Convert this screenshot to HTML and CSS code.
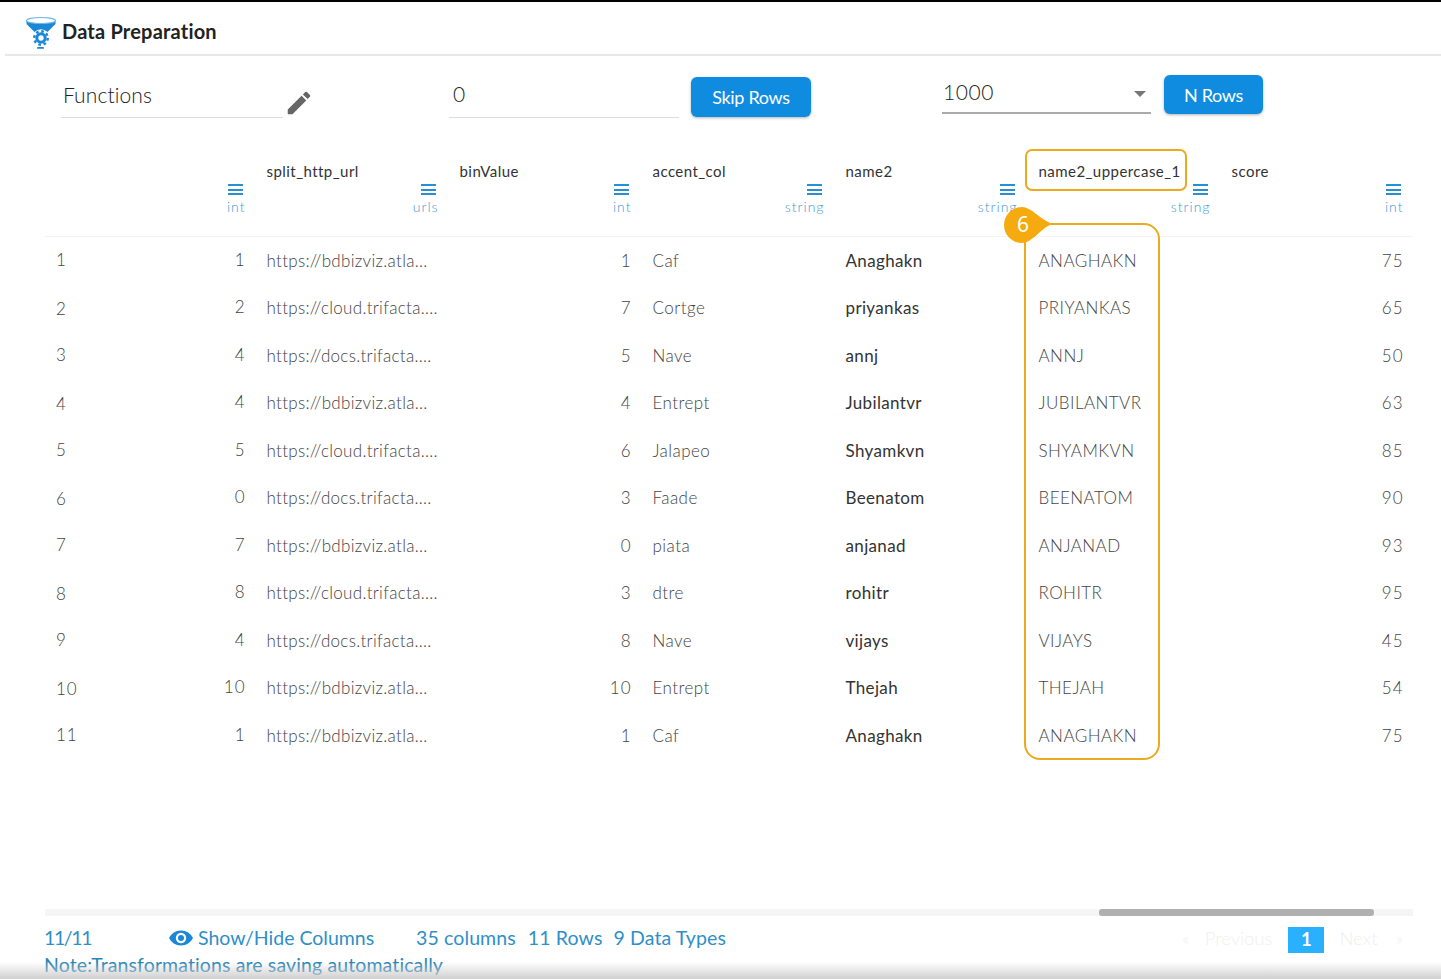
FILE: index.html
```html
<!DOCTYPE html>
<html lang="en">
<head>
<meta charset="utf-8">
<title>Data Preparation</title>
<link rel="stylesheet" href="styles.css">
</head>
<body>
<div class="app">
  <header class="topbar">
    <svg class="logo" viewBox="0 0 32 34" width="32" height="34" aria-hidden="true">
      <path d="M1.5 4.5C1.5 8 30.500 8 30.500 4.500V8L21 17.500H11L1.500 8Z" fill="#1b87d6"/>
      <ellipse cx="16" cy="4.500" rx="14.500" ry="3" fill="#fff" stroke="#6db8e8" stroke-width="1.200"/>
      <path d="M3 7.500C8 10 24 10 29 7.500L21 16H11Z" fill="#1b87d6"/>
      <circle cx="16" cy="22" r="8.800" fill="#fff"/>
      <circle cx="16" cy="22" r="6.800" fill="none" stroke="#1b87d6" stroke-width="2.400" stroke-dasharray="2.700 2.640"/>
      <circle cx="16" cy="22" r="4.200" fill="none" stroke="#1b87d6" stroke-width="3"/>
      <rect x="12" y="31" width="7" height="1.800" rx=".9" fill="#1b87d6"/>
    </svg>
    <span class="title">Data Preparation</span>
  </header>

  <section class="controls">
    <div class="field field-fn">Functions</div>
    <svg class="pencil" viewBox="0 0 24 24" width="30" height="30" aria-hidden="true"><path d="M3 17.250V21h3.750L17.810 9.940l-3.750-3.750L3 17.250zM20.710 7.040a1 1 0 0 0 0-1.410l-2.340-2.340a1 1 0 0 0-1.410 0l-1.830 1.830 3.750 3.750 1.830-1.830z" fill="#666"/></svg>
    <div class="field field-skip">0</div>
    <button class="btn btn-skip">Skip Rows</button>
    <div class="field field-select"><span>1000</span><i class="caret"></i></div>
    <button class="btn btn-rows">N Rows</button>
  </section>

  <main class="table-area">
    <div class="row head">
      <div class="hcell"><span class="hname"></span><i class="menu"></i><span class="type">int</span></div>
      <div class="hcell"><span class="hname">split_http_url</span><i class="menu"></i><span class="type">urls</span></div>
      <div class="hcell"><span class="hname">binValue</span><i class="menu"></i><span class="type">int</span></div>
      <div class="hcell"><span class="hname">accent_col</span><i class="menu"></i><span class="type">string</span></div>
      <div class="hcell"><span class="hname">name2</span><i class="menu"></i><span class="type">string</span></div>
      <div class="hcell"><span class="hname">name2_uppercase_1</span><i class="menu"></i><span class="type">string</span></div>
      <div class="hcell"><span class="hname">score</span><i class="menu"></i><span class="type">int</span></div>
    </div>
    <div class="row"><div class="cell first"><span class="idx">1</span><span>1</span></div><div class="cell url">https://bdbizviz.atla...</div><div class="cell num">1</div><div class="cell">Caf</div><div class="cell dark">Anaghakn</div><div class="cell">ANAGHAKN</div><div class="cell num">75</div></div>
    <div class="row"><div class="cell first"><span class="idx">2</span><span>2</span></div><div class="cell url">https://cloud.trifacta....</div><div class="cell num">7</div><div class="cell">Cortge</div><div class="cell dark">priyankas</div><div class="cell">PRIYANKAS</div><div class="cell num">65</div></div>
    <div class="row"><div class="cell first"><span class="idx">3</span><span>4</span></div><div class="cell url">https://docs.trifacta....</div><div class="cell num">5</div><div class="cell">Nave</div><div class="cell dark">annj</div><div class="cell">ANNJ</div><div class="cell num">50</div></div>
    <div class="row"><div class="cell first"><span class="idx">4</span><span>4</span></div><div class="cell url">https://bdbizviz.atla...</div><div class="cell num">4</div><div class="cell">Entrept</div><div class="cell dark">Jubilantvr</div><div class="cell">JUBILANTVR</div><div class="cell num">63</div></div>
    <div class="row"><div class="cell first"><span class="idx">5</span><span>5</span></div><div class="cell url">https://cloud.trifacta....</div><div class="cell num">6</div><div class="cell">Jalapeo</div><div class="cell dark">Shyamkvn</div><div class="cell">SHYAMKVN</div><div class="cell num">85</div></div>
    <div class="row"><div class="cell first"><span class="idx">6</span><span>0</span></div><div class="cell url">https://docs.trifacta....</div><div class="cell num">3</div><div class="cell">Faade</div><div class="cell dark">Beenatom</div><div class="cell">BEENATOM</div><div class="cell num">90</div></div>
    <div class="row"><div class="cell first"><span class="idx">7</span><span>7</span></div><div class="cell url">https://bdbizviz.atla...</div><div class="cell num">0</div><div class="cell">piata</div><div class="cell dark">anjanad</div><div class="cell">ANJANAD</div><div class="cell num">93</div></div>
    <div class="row"><div class="cell first"><span class="idx">8</span><span>8</span></div><div class="cell url">https://cloud.trifacta....</div><div class="cell num">3</div><div class="cell">dtre</div><div class="cell dark">rohitr</div><div class="cell">ROHITR</div><div class="cell num">95</div></div>
    <div class="row"><div class="cell first"><span class="idx">9</span><span>4</span></div><div class="cell url">https://docs.trifacta....</div><div class="cell num">8</div><div class="cell">Nave</div><div class="cell dark">vijays</div><div class="cell">VIJAYS</div><div class="cell num">45</div></div>
    <div class="row"><div class="cell first"><span class="idx">10</span><span>10</span></div><div class="cell url">https://bdbizviz.atla...</div><div class="cell num">10</div><div class="cell">Entrept</div><div class="cell dark">Thejah</div><div class="cell">THEJAH</div><div class="cell num">54</div></div>
    <div class="row"><div class="cell first"><span class="idx">11</span><span>1</span></div><div class="cell url">https://bdbizviz.atla...</div><div class="cell num">1</div><div class="cell">Caf</div><div class="cell dark">Anaghakn</div><div class="cell">ANAGHAKN</div><div class="cell num">75</div></div>

    <div class="hl hl-head"></div>
    <div class="hl hl-body"></div>
    <div class="badge"><svg viewBox="0 0 48 36" width="48" height="36" aria-hidden="true"><path d="M18 0C27 0 36 12 48 17C36 22 28 36 18 36A18 18 0 0 1 18 0Z" fill="#f5ab0f"/></svg><span>6</span></div>
  </main>

  <div class="scrollbar"><div class="thumb"></div></div>

  <footer class="footer">
    <div class="foot-line">
      <span class="count">11/11</span>
      <svg class="eye" viewBox="0 0 24 16" width="24" height="16" aria-hidden="true"><path d="M12 .5C6.500.5 2.300 3.500 0 8c2.300 4.500 6.500 7.500 12 7.500S21.700 12.500 24 8C21.700 3.500 17.500.5 12 .5z" fill="#1b87d6"/><circle cx="12" cy="8" r="5.200" fill="#fff"/><circle cx="12" cy="8" r="3" fill="#1b87d6"/></svg>
      <span class="show">Show/Hide Columns</span>
      <span class="stat s1">35 columns</span>
      <span class="stat s2">11 Rows</span>
      <span class="stat s3">9 Data Types</span>
      <nav class="pager">
        <span class="pg-ends">«</span>
        <span class="pg-prev">Previous</span>
        <span class="pg-cur">1</span>
        <span class="pg-next">Next</span>
        <span class="pg-ends">»</span>
      </nav>
    </div>
    <div class="note">Note:Transformations are saving automatically</div>
  </footer>
</div>
</body>
</html>
```
FILE: styles.css
```css
* { box-sizing: border-box; }
html, body { margin: 0; padding: 0; background: #fff; }
body { font-family: "Lato", "Open Sans", sans-serif; color: #333; }
.app { position: relative; width: 1441px; height: 979px; overflow: hidden; border-top: 2px solid #000; display: flex; flex-direction: column; }
.app::after { content: ""; position: absolute; left: 0; right: 0; bottom: 0; height: 17px; background: linear-gradient(to bottom, rgba(200,200,200,0), rgba(205,205,205,.95)); pointer-events: none; }

.topbar { height: 54px; margin-left: 5px; padding: 13px 0 0 20px; border-bottom: 2px solid #e8e8e8; display: flex; align-items: flex-start; }
.logo { flex: none; margin-top: 1px; }
.title { margin-left: 5px; font-size: 20px; line-height: 32px; font-weight: 700; color: #222; letter-spacing: .2px; }

.controls { height: 93px; padding-left: 61px; display: flex; align-items: flex-start; }
.field { font-size: 21px; font-weight: 300; color: #222; border-bottom: 1px solid #ddd; }
.field-fn { width: 222px; height: 62px; padding: 24px 0 0 2px; line-height: 30px; letter-spacing: .1px; }
.pencil { margin: 32px 0 0 1px; flex: none; }
.field-skip { width: 230px; height: 62px; margin-left: 135px; padding: 23px 0 0 4px; line-height: 30px; }
.btn { border: 0; border-radius: 6px; background: #0f8ce0; color: #fff; font: 400 18px/1 "Lato", sans-serif; letter-spacing: -.3px; box-shadow: 0 1px 3px rgba(0,0,0,.3); }
.btn-skip { width: 120px; height: 40px; margin: 21px 0 0 12px; }
.field-select { width: 209px; height: 58px; margin-left: 131px; padding: 21px 5px 0 1px; line-height: 30px; border-bottom: 2px solid #aaa; display: flex; justify-content: space-between; letter-spacing: .6px; }
.caret { width: 0; height: 0; margin-top: 14px; border: 6px solid transparent; border-top-color: #777; border-bottom: 0; }
.btn-rows { width: 99px; height: 39px; margin: 19px 0 0 13px; }

.table-area { position: relative; margin-left: 45px; width: 1368px; height: 760px; flex: none; }
.row { display: grid; grid-template-columns: 210.5px repeat(6, 193px); height: 47.5px; align-items: center; }
.head { height: 88px; border-bottom: 1px solid #f4f4f4; align-items: start; }
.hcell { height: 88px; padding: 12px 11px 0; display: flex; flex-direction: column; align-items: flex-start; }
.hname { height: 20px; margin-bottom: 1px; font-size: 15px; line-height: 20px; color: #333; white-space: nowrap; letter-spacing: .45px; }
.menu { align-self: flex-end; width: 15px; height: 11px; margin: 2px 2px 0 0; border-top: 2px solid #2a8fd0; border-bottom: 2px solid #2a8fd0; position: relative; }
.menu::after { content: ""; position: absolute; left: 0; right: 0; top: 2.5px; height: 2px; background: #2a8fd0; }
.type { align-self: flex-end; margin: 3px -1px 0 0; font-size: 14px; line-height: 18px; font-weight: 300; color: #3f98cf; letter-spacing: 1px; }

.cell { padding: 0 11px; font-size: 17px; line-height: 24px; font-weight: 300; color: #444; white-space: nowrap; letter-spacing: .45px; }
.url { letter-spacing: .3px; }
.first { display: flex; justify-content: space-between; padding-right: 10px; letter-spacing: 1px; }
.num { padding-right: 10px; text-align: right; letter-spacing: 1px; }
.dark { color: #333; font-weight: 400; letter-spacing: .35px; }
.idx { margin-bottom: 2px; }
.row:nth-child(odd) .idx { margin: 2px 0 0; }

.hl { position: absolute; border: 2px solid #edaa1e; }
.hl-head { left: 980px; top: 0; width: 162px; height: 42px; border-radius: 7px; }
.hl-body { left: 979px; top: 74px; width: 136px; height: 537px; border-radius: 16px; }
.badge { position: absolute; left: 959px; top: 58px; width: 48px; height: 36px; }
.badge svg { display: block; }
.badge span { position: absolute; left: 0; top: 0; width: 38px; text-align: center; font-size: 21px; line-height: 34px; font-family: "Noto Sans", sans-serif; color: #fff; }

.scrollbar { margin-left: 45px; width: 1368px; height: 7px; background: #f5f5f5; flex: none; }
.thumb { width: 275px; height: 7px; margin-left: 1054px; border-radius: 3px; background: #b0b0b0; }

.footer { padding: 9px 0 0 44px; color: #2f8fc8; font-size: 19.5px; line-height: 26px; font-weight: 400; }
.foot-line { display: flex; align-items: center; height: 26px; position: relative; }
.count { width: 125px; letter-spacing: -1.400px; }
.eye { flex: none; margin-right: 5px; }
.show { width: 218px; }
.stat { letter-spacing: .12px; }
.s2 { margin-left: 12px; }
.s3 { margin-left: 11px; }
.pager { margin-left: auto; margin-right: 38px; display: flex; align-items: center; color: #efefef; font-size: 18.500px; font-weight: 300; }
.pg-prev { margin: 0 16px 0 15px; }
.pg-cur { width: 36px; height: 26px; margin: 2px 0 -2px; background: #29b0ff; color: #fff; text-align: center; font-weight: 700; line-height: 25px; }
.pg-next { margin: 0 18px 0 15px; }
.note { margin-top: 1px; line-height: 26px; font-size: 19.500px; letter-spacing: .12px; color: #2a86b8; }
```
